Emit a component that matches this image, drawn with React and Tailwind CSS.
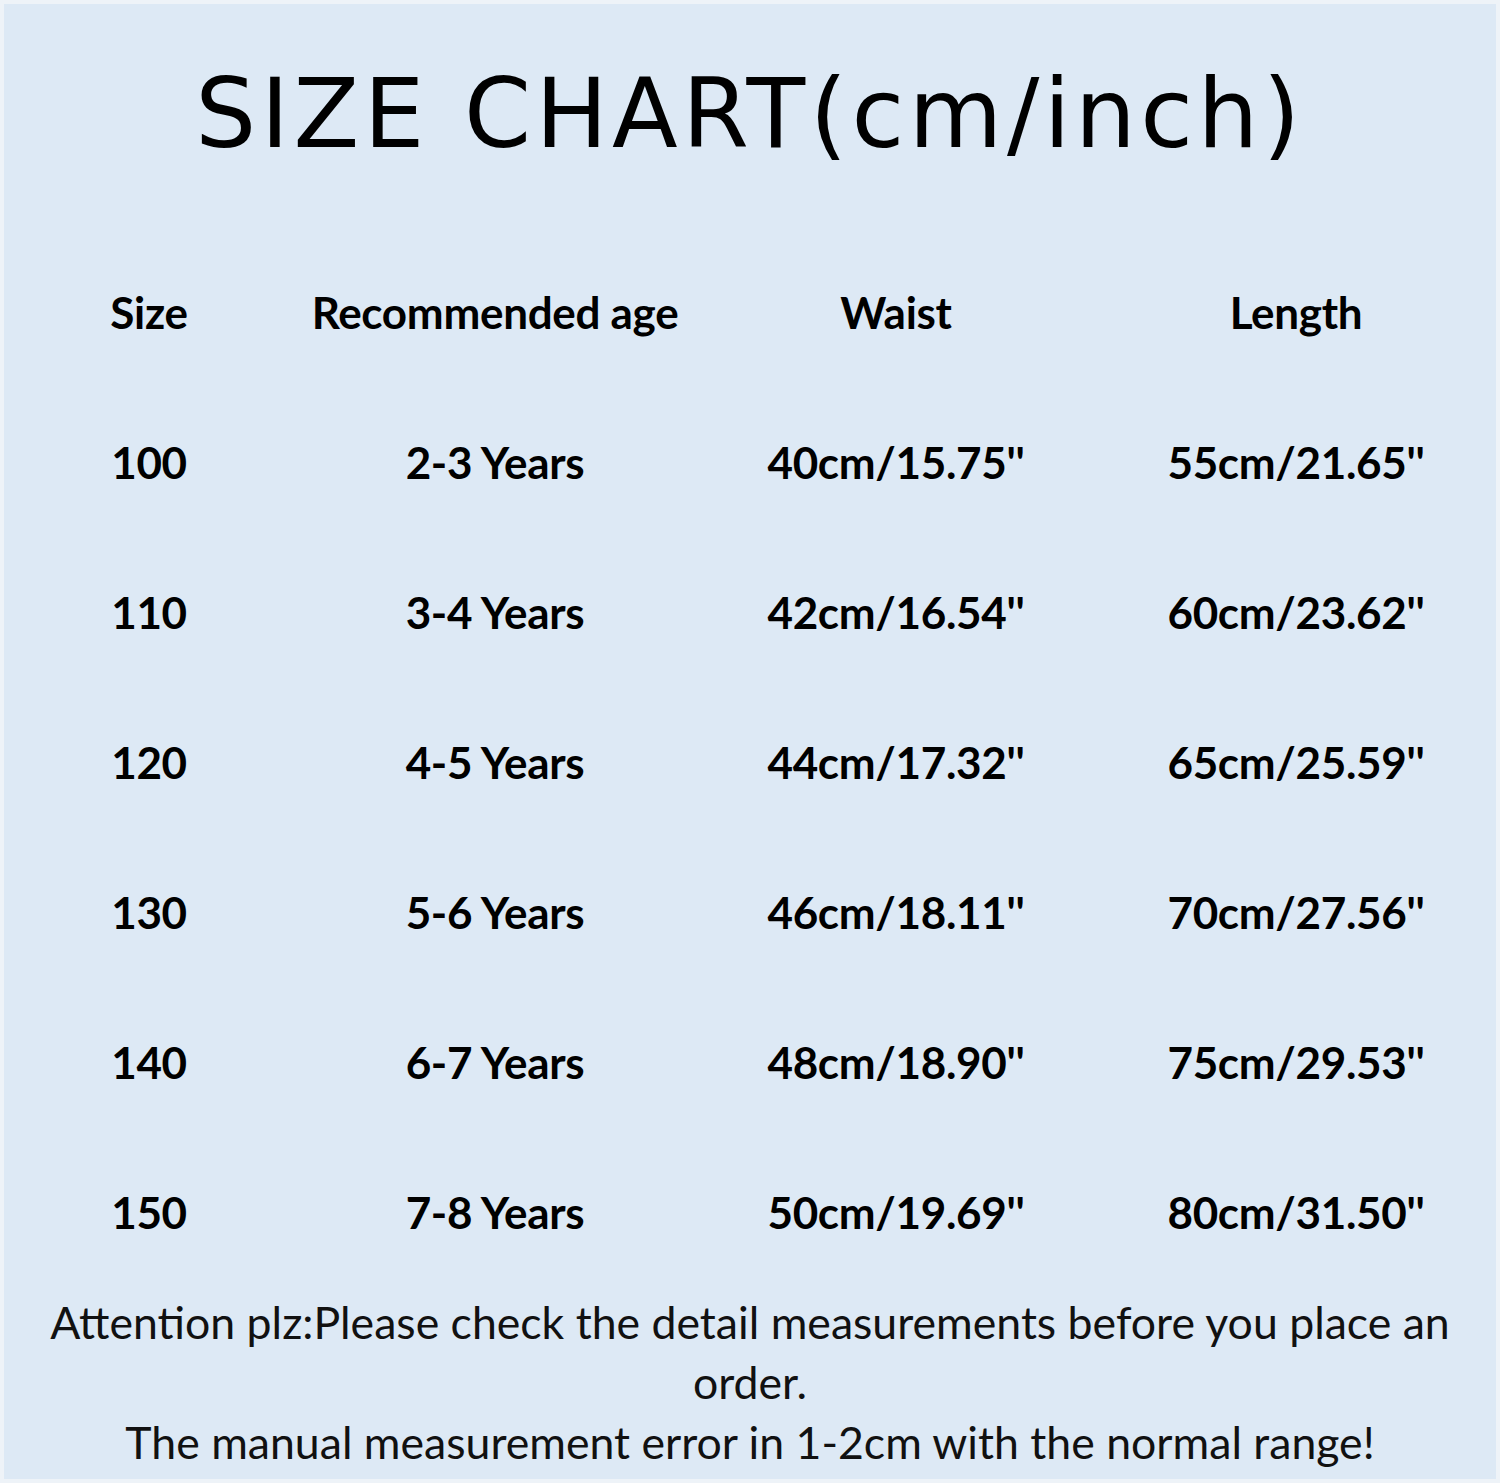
export default function App() {
  const rows = [
    ["100", "2-3 Years", "40cm/15.75''", "55cm/21.65''"],
    ["110", "3-4 Years", "42cm/16.54''", "60cm/23.62''"],
    ["120", "4-5 Years", "44cm/17.32''", "65cm/25.59''"],
    ["130", "5-6 Years", "46cm/18.11''", "70cm/27.56''"],
    ["140", "6-7 Years", "48cm/18.90''", "75cm/29.53''"],
    ["150", "7-8 Years", "50cm/19.69''", "80cm/31.50''"],
  ];
  const cols = "grid grid-cols-[290px_402px_400px_400px]";
  return (
    <div className="w-[1500px] h-[1483px] bg-[#eef3f8] p-[4px]">
      <div className="w-full h-full bg-[#dde9f5] flex flex-col text-black">
        <div className="h-[233px] flex items-start justify-center pt-[62px]">
          <h1 className="font-['DejaVu_Sans',sans-serif] text-[96px] leading-none tracking-[4.5px]">
            SIZE CHART(cm/inch)
          </h1>
        </div>
        <div className="flex flex-col font-['Lato',sans-serif] font-bold">
          <div className={`${cols} h-[150px] items-center text-[44px] tracking-[-0.3px]`}>
            <div className="text-center">Size</div>
            <div className="text-center">Recommended age</div>
            <div className="text-center">Waist</div>
            <div className="text-center">Length</div>
          </div>
          {rows.map((r) => (
            <div key={r[0]} className={`${cols} h-[150px] items-center text-[44px] tracking-[-0.3px]`}>
              {r.map((c, i) => (
                <div key={i} className="text-center">{c}</div>
              ))}
            </div>
          ))}
        </div>
        <div className="flex flex-col items-center pt-[5px] font-['Lato',sans-serif] text-[44.6px] leading-[60px] text-[#111]">
          <div className="whitespace-nowrap">Attention plz:Please check the detail measurements before you place an</div>
          <div>order.</div>
          <div className="whitespace-nowrap">The manual measurement error in 1-2cm with the normal range!</div>
        </div>
      </div>
    </div>
  );
}
